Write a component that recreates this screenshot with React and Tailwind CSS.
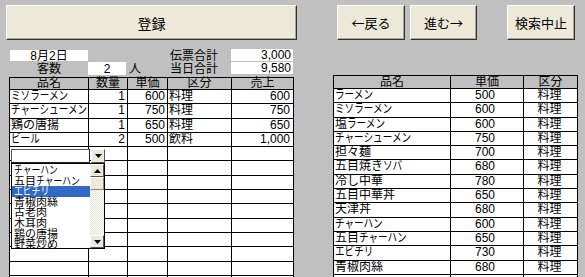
import React from "react";

const font = 'font-["Liberation_Sans","Noto_Sans_CJK_JP",sans-serif]';

const orders = [
  ["ミソラーメン", "1", "600", "料理", "600"],
  ["チャーシューメン", "1", "750", "料理", "750"],
  ["鶏の唐揚", "1", "650", "料理", "650"],
  ["ビール", "2", "500", "飲料", "1,000"],
  ...Array.from({ length: 10 }, () => ["", "", "", "", ""]),
];

const menu = [
  ["ラーメン", "500", "料理"],
  ["ミソラーメン", "600", "料理"],
  ["塩ラーメン", "600", "料理"],
  ["チャーシューメン", "750", "料理"],
  ["担々麺", "700", "料理"],
  ["五目焼きソバ", "680", "料理"],
  ["冷し中華", "780", "料理"],
  ["五目中華丼", "650", "料理"],
  ["天津丼", "680", "料理"],
  ["チャーハン", "600", "料理"],
  ["五目チャーハン", "650", "料理"],
  ["エビチリ", "730", "料理"],
  ["青椒肉絲", "680", "料理"],
  ["", "", ""],
];

const picks = [
  "チャーハン",
  "五目チャーハン",
  "エビチリ",
  "青椒肉絲",
  "古老肉",
  "木耳肉",
  "鶏の唐揚",
  "野菜炒め",
];

// the original font has narrow katakana; squeeze the trailing katakana run
function Name({ text }) {
  const m = text.match(/^(.*?)([ァ-ヶー]+)$/);
  if (!m) return text;
  return (
    <>
      {m[1]}
      <span className="inline-block origin-left scale-x-[0.8]">{m[2]}</span>
    </>
  );
}

function Btn({ className, children }) {
  return (
    <button
      className={`bg-[#ece9d8] border border-t-white border-l-white border-r-[#303030] border-b-[#303030] shadow-[inset_-1px_-1px_0_#aca899] font-["Noto_Sans_CJK_JP",sans-serif] text-[13px] leading-none flex items-center justify-center ${className}`}
    >
      {children}
    </button>
  );
}

function Arrow({ up }) {
  return (
    <svg width="7" height="4" viewBox="0 0 7 4">
      <path d={up ? "M3.5 0 L7 4 L0 4 Z" : "M0 0 L7 0 L3.5 4 Z"} fill="#000" />
    </svg>
  );
}

function Combo() {
  return (
    <div className="absolute left-[1px] top-[71px] w-[94px]">
      <div className="flex h-[14px]">
        <div className="w-[79px] bg-white border border-[#222] border-t-[#555] border-l-[#555]" />
        <div className="w-[14px] ml-[1px] bg-[#ece9d8] border border-t-white border-l-white border-r-[#555] border-b-[#555] flex items-center justify-center">
          <Arrow />
        </div>
      </div>
      <div className="flex h-[86px] border border-black bg-white">
        <div className="w-[78px] pt-[1px] text-[11px] leading-[10.6px]">
          {picks.map((p, i) => (
            <div
              key={i}
              className={`h-[10.6px] pl-[2px] whitespace-nowrap ${
                p === "エビチリ" ? "bg-[#316ac5] text-white" : ""
              }`}
            >
              <Name text={p} />
            </div>
          ))}
        </div>
        <div className="w-[14px] flex flex-col bg-[repeating-conic-gradient(#ffffff_0%_25%,#e6e3d6_0%_50%)] bg-[length:2px_2px]">
          <div className="h-[13px] bg-[#ece9d8] border border-t-white border-l-white border-r-[#555] border-b-[#555] flex items-center justify-center">
            <Arrow up />
          </div>
          <div className="h-[13px] bg-[#ece9d8] border border-t-white border-l-white border-r-[#888] border-b-[#888]" />
          <div className="flex-1" />
          <div className="h-[13px] bg-[#ece9d8] border border-t-white border-l-white border-r-[#555] border-b-[#555] flex items-center justify-center">
            <Arrow />
          </div>
        </div>
      </div>
    </div>
  );
}

export default function App() {
  return (
    <div
      className={`w-[585px] h-[277px] bg-[#c0c0c0] overflow-hidden text-black ${font}`}
    >
      {/* buttons */}
      <div className="flex pt-[5px]">
        <Btn className="ml-[6px] w-[291px] h-[35px] text-[14px]">登録</Btn>
        <Btn className="ml-[40px] w-[68px] h-[35px]">←戻る</Btn>
        <Btn className="ml-[5px] w-[67px] h-[35px]">進む→</Btn>
        <Btn className="ml-[30px] w-[68px] h-[35px]">検索中止</Btn>
      </div>

      <div className="flex">
        {/* left: order slip */}
        <div className="ml-[9px] w-[285px] mt-[9px] text-[12px]">
          <div className="flex h-[12px] leading-[12px]">
            <div className="ml-[1px] w-[78px] bg-white text-center mt-[1px]">8月2日</div>
            <div className="ml-[82px] w-[61px] mt-[1px]">伝票合計</div>
            <div className="w-[62px] bg-white text-right pr-[2px]">3,000</div>
          </div>
          <div className="flex h-[14px] leading-[12px] mt-[1px]">
            <div className="ml-[1px] w-[78px] text-center pt-[1px]">客数</div>
            <div className="w-[38px] h-[13px] bg-white text-center pt-[1px]">2</div>
            <div className="w-[44px] pl-[3px] pt-[1px]">人</div>
            <div className="w-[61px] pt-[1px]">当日合計</div>
            <div className="w-[62px] bg-white text-right pr-[2px] h-[12px]">9,580</div>
          </div>

          <div className="relative mt-[1px] border-l border-t border-black">
            <div className="grid grid-cols-[79px_39px_40px_64px_62px] h-[12px] border-b border-black leading-[11px]">
              {["品名", "数量", "単価", "区分", "売上"].map((h) => (
                <div key={h} className="border-r border-black text-center">
                  {h}
                </div>
              ))}
            </div>
            {orders.map((r, i) => (
              <div
                key={i}
                className="grid grid-cols-[79px_39px_40px_64px_62px] h-[14.3px] border-b border-black bg-white leading-[13px]"
              >
                <div className="border-r border-black pl-[1px] overflow-hidden whitespace-nowrap">
                  <Name text={r[0]} />
                </div>
                <div className="border-r border-black text-right pr-[2px]">{r[1]}</div>
                <div className="border-r border-black text-right pr-[2px]">{r[2]}</div>
                <div className="border-r border-black pl-[1px]">{r[3]}</div>
                <div className="border-r border-black text-right pr-[3px]">{r[4]}</div>
              </div>
            ))}
            <Combo />
          </div>
        </div>

        {/* right: menu list */}
        <div className="ml-[39px] mt-[35px] w-[245px] text-[12px]">
          <div className="border-l border-t border-black">
            <div className="grid grid-cols-[117px_73px_54px] h-[13px] border-b border-black leading-[12px]">
              {["品名", "単価", "区分"].map((h) => (
                <div key={h} className="border-r border-black text-center">
                  {h}
                </div>
              ))}
            </div>
            {menu.map((r, i) => (
              <div
                key={i}
                className="grid grid-cols-[117px_73px_54px] h-[14.3px] border-b border-black bg-white leading-[13px]"
              >
                <div className="border-r border-black pl-[1px] whitespace-nowrap">
                  <Name text={r[0]} />
                </div>
                <div className="border-r border-black text-center pr-[4px]">{r[1]}</div>
                <div className="border-r border-black text-center pr-[2px]">{r[2]}</div>
              </div>
            ))}
          </div>
        </div>
      </div>
    </div>
  );
}
